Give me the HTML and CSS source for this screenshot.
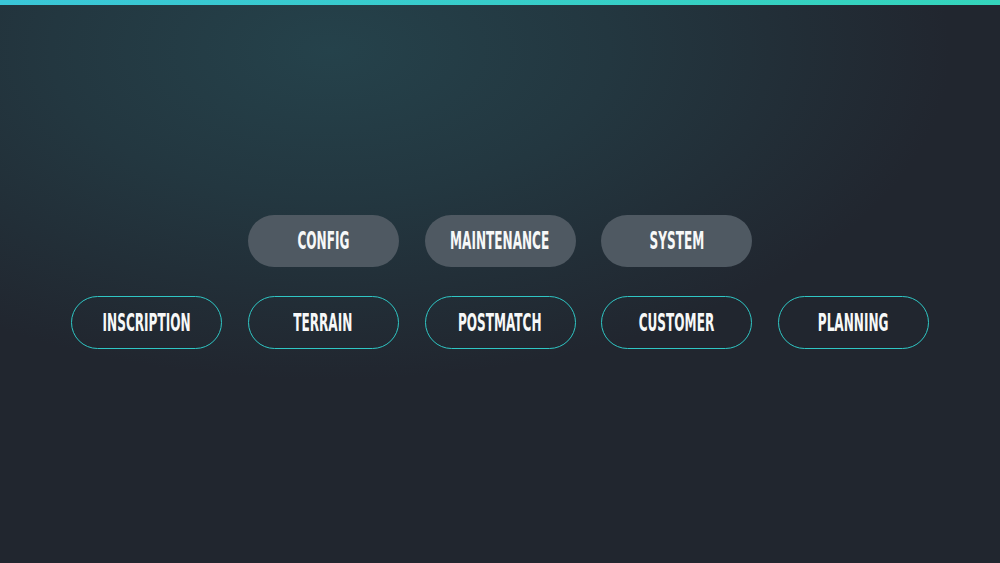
FILE: index.html
```html
<!DOCTYPE html>
<html lang="en">
<head>
<meta charset="utf-8">
<title>Tags</title>
<link rel="stylesheet" href="styles.css">
</head>
<body>
<div class="topbar"></div>
<main class="stage">
  <div class="row">
    <div class="pill pill-filled"><span class="label">Config</span></div>
    <div class="pill pill-filled"><span class="label">Maintenance</span></div>
    <div class="pill pill-filled"><span class="label">System</span></div>
  </div>
  <div class="row">
    <div class="pill pill-outline"><span class="label">Inscription</span></div>
    <div class="pill pill-outline"><span class="label">Terrain</span></div>
    <div class="pill pill-outline"><span class="label">Postmatch</span></div>
    <div class="pill pill-outline"><span class="label">Customer</span></div>
    <div class="pill pill-outline"><span class="label">Planning</span></div>
  </div>
</main>
</body>
</html>
```
FILE: styles.css
```css
html, body {
  margin: 0;
  padding: 0;
  height: 100%;
}
body {
  background-color: #21262f;
  background-image: radial-gradient(ellipse 620px 330px at 330px 50px, #25424b 0%, #233740 45%, #21262f 100%);
  font-family: "DejaVu Sans Condensed", "DejaVu Sans", sans-serif;
  overflow: hidden;
}
.topbar {
  height: 5px;
  background: linear-gradient(90deg, #3ac6d8 0%, #34d4bb 100%);
}
.stage {
  display: flex;
  flex-direction: column;
  align-items: center;
  gap: 29px;
  padding-top: 210px;
}
.row {
  display: flex;
  gap: 25.75px;
}
.pill {
  box-sizing: border-box;
  width: 151px;
  height: 52px;
  border-radius: 26px;
  display: flex;
  align-items: center;
  justify-content: center;
}
.pill-filled {
  background: #4f5962;
  height: 52px;
}
.pill-outline {
  border: 1.8px solid #2fc6c4;
  height: 53px;
  border-radius: 27px;
}
.label {
  display: inline-block;
  color: #f7f8f8;
  font-weight: 700;
  font-size: 24px;
  text-transform: uppercase;
  transform: scaleX(0.56);
  letter-spacing: 0;
  line-height: 1;
}
```
